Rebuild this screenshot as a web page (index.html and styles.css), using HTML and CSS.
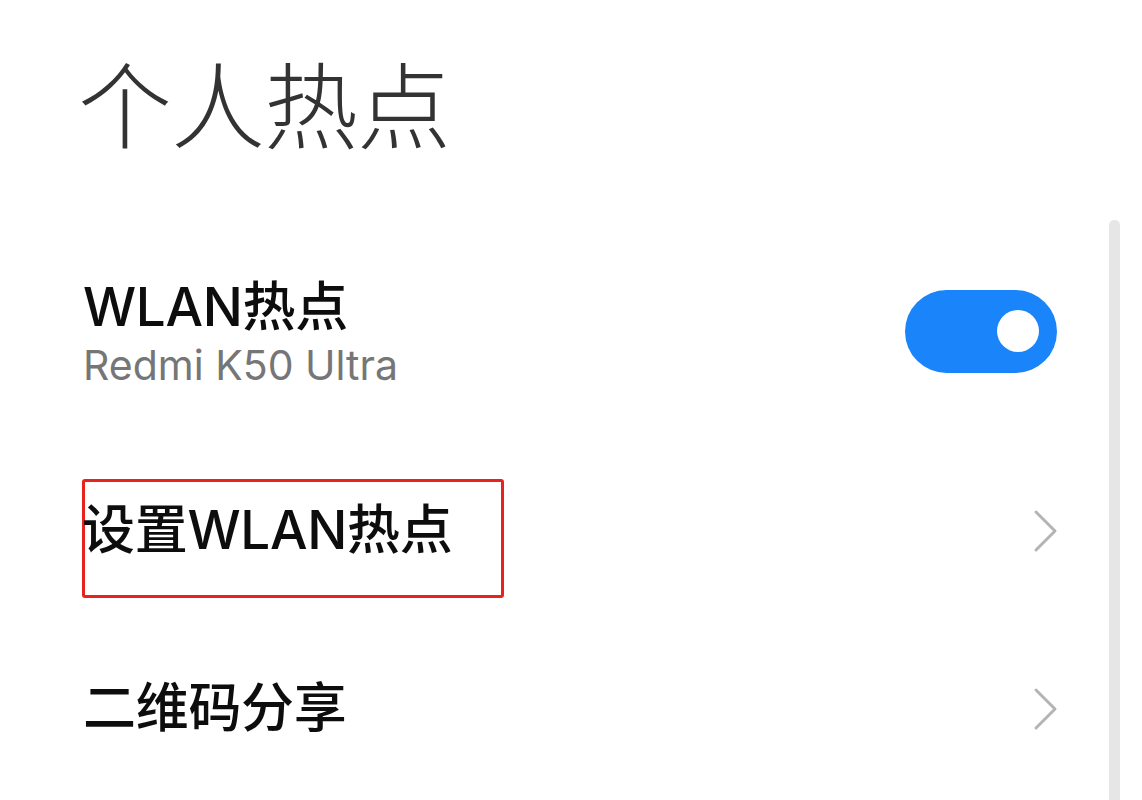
FILE: index.html
```html
<!DOCTYPE html>
<html lang="zh-CN">
<head>
  <meta charset="UTF-8">
  <title>个人热点</title>
  <link rel="stylesheet" href="styles.css">
</head>
<body>
  <div class="page">
    <h1 class="title">个人热点</h1>

    <div class="row row-switch">
      <div class="row-text">
        <div class="row-name">WLAN热点</div>
        <div class="row-sub">Redmi K50 Ultra</div>
      </div>
      <div class="switch on"><span class="knob"></span></div>
    </div>

    <div class="row row-setup">
      <div class="mark">
        <span class="row-name">设置WLAN热点</span>
      </div>
      <svg class="chevron" width="26" height="44" viewBox="0 0 26 44">
        <path d="M3 3 L22 22 L3 41" fill="none" stroke="#b4b4b4" stroke-width="3" stroke-linecap="round" stroke-linejoin="round"/>
      </svg>
    </div>

    <div class="row row-qr">
      <span class="row-name">二维码分享</span>
      <svg class="chevron" width="26" height="44" viewBox="0 0 26 44">
        <path d="M3 3 L22 22 L3 41" fill="none" stroke="#b4b4b4" stroke-width="3" stroke-linecap="round" stroke-linejoin="round"/>
      </svg>
    </div>
  </div>

  <div class="scrollbar"></div>
</body>
</html>
```

FILE: styles.css
```css
html, body {
  margin: 0;
  height: 100%;
  overflow: hidden;
  background: #fff;
}
body {
  font-family: Inter, "Noto Sans CJK SC", sans-serif;
  color: #111;
}
.page {
  padding: 0 85px 0 83px;
}
.title {
  margin: 0 0 0 -5px;
  height: 214px;
  line-height: 202px;
  font-family: "Noto Sans CJK SC", sans-serif;
  font-size: 94px;
  font-weight: 300;
  color: #333;
  letter-spacing: -1px;
}
.row {
  display: flex;
  align-items: center;
  justify-content: space-between;
}
.row-switch {
  height: 234px;
}
.row-setup {
  height: 166px;
}
.row-qr {
  height: 190px;
}
.row-name {
  font-size: 53px;
  font-weight: 500;
  line-height: 1.2;
  color: #0d0d0d;
  letter-spacing: -0.3px;
}
.row-switch .row-text {
  padding-top: 6px;
}
.row-sub {
  font-size: 41px;
  line-height: 1.3;
  color: #767676;
}
.switch {
  width: 152px;
  height: 83px;
  border-radius: 42px;
  background: #1a84fb;
  position: relative;
}
.knob {
  position: absolute;
  right: 18px;
  top: 20px;
  width: 42px;
  height: 42px;
  border-radius: 50%;
  background: #fff;
}
.mark {
  box-sizing: border-box;
  width: 422px;
  height: 119px;
  margin-left: -1px;
  margin-top: 15px;
  padding: 0 0 15px 0;
  display: flex;
  align-items: center;
  border: 3px solid #e8231d;
  border-radius: 3px;
}
.mark .row-name {
  margin-left: -3px;
}
.chevron {
  margin-right: -2px;
}
.scrollbar {
  position: fixed;
  left: 1109px;
  top: 220px;
  width: 11px;
  bottom: 0;
  background: #e6e6e6;
  border-radius: 5px 5px 0 0;
}
```
